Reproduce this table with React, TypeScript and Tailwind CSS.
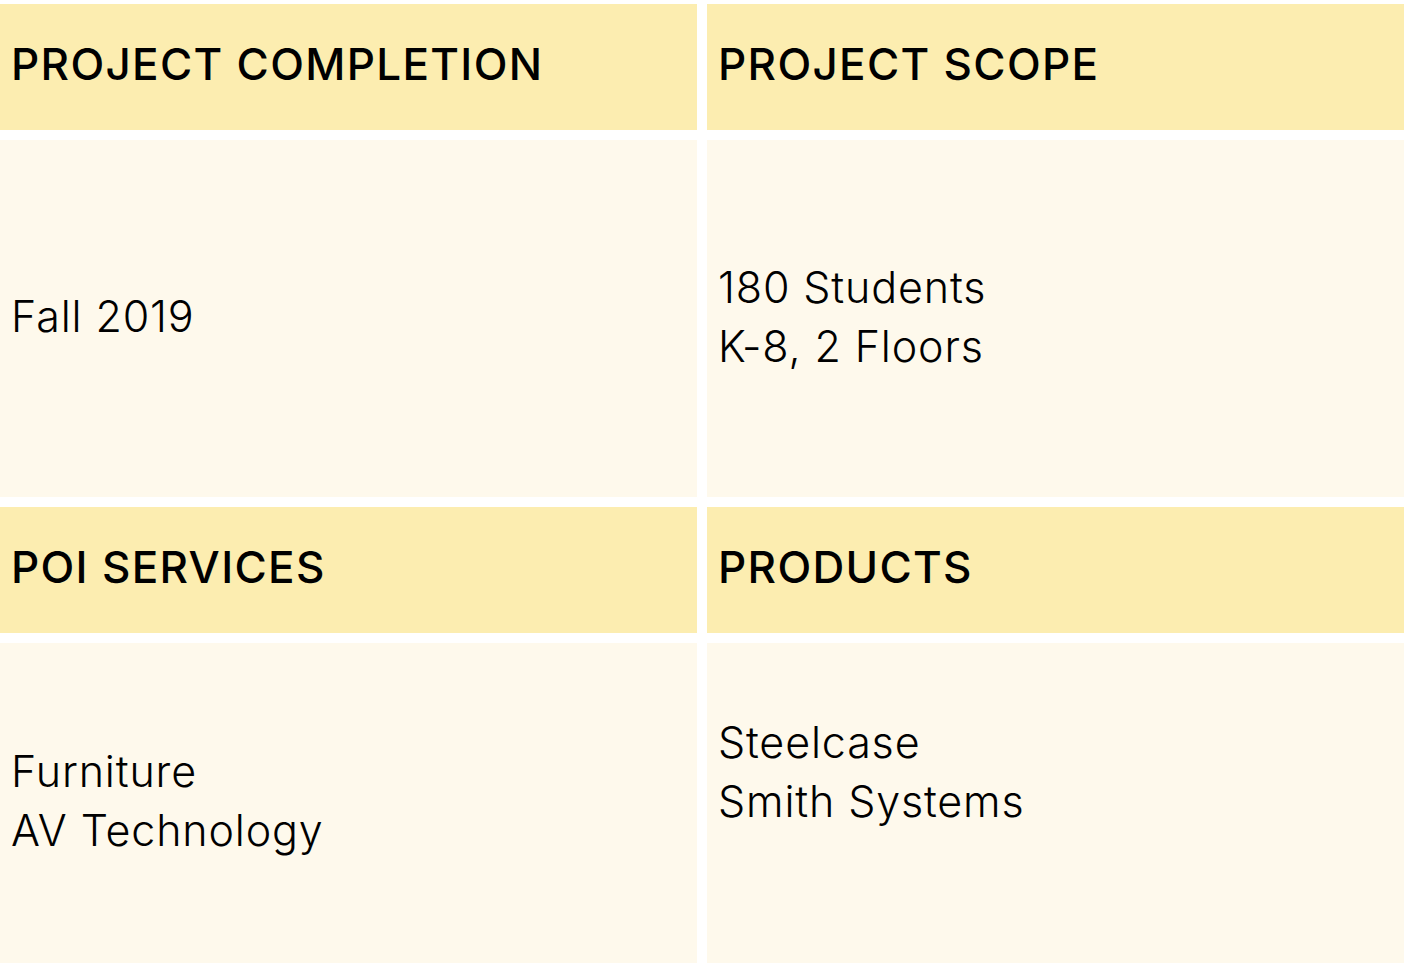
import React from 'react';

type Cell = { title: string; lines: string[] };

const rows: { cells: Cell[]; height: string }[] = [
  {
    height: 'h-[357px]',
    cells: [
      { title: 'PROJECT COMPLETION', lines: ['Fall 2019'] },
      { title: 'PROJECT SCOPE', lines: ['180 Students', 'K-8, 2 Floors'] },
    ],
  },
  {
    height: 'h-[320px]',
    cells: [
      { title: 'POI SERVICES', lines: ['Furniture', 'AV Technology'] },
      { title: 'PRODUCTS', lines: ['Steelcase', 'Smith Systems', '\u00A0'] },
    ],
  },
];

const App: React.FC = () => {
  return (
    <div
      className="w-[1404px] h-[968px] bg-white pt-[4px] grid grid-cols-2 gap-[10px] content-start"
      style={{ fontFamily: 'Inter, "Open Sans", sans-serif' }}
    >
      {rows.map((row, r) => (
        <React.Fragment key={r}>
          {/* header band */}
          {row.cells.map((c) => (
            <div
              key={c.title}
              className="h-[126px] bg-[#fcedb0] flex items-center pl-[11px] pb-[6px] text-[44px] font-medium text-black tracking-[0.03em]"
            >
              {c.title}
            </div>
          ))}
          {/* body band */}
          {row.cells.map((c) => (
            <div
              key={c.title + '-body'}
              className={`${row.height} bg-[#fef9ec] flex flex-col justify-center pl-[11px] pb-[4px] text-[43px] font-light leading-[59px] text-black tracking-[0.02em]`}
            >
              {c.lines.map((l, i) => (
                <div key={i}>{l}</div>
              ))}
            </div>
          ))}
        </React.Fragment>
      ))}
    </div>
  );
};

export default App;
